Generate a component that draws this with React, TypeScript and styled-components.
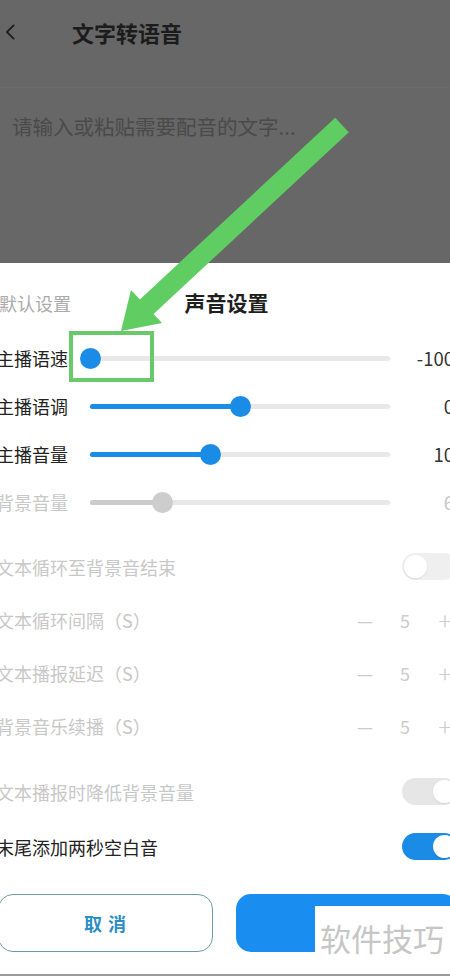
import React from 'react'
import styled, { createGlobalStyle } from 'styled-components'

const GlobalStyle = createGlobalStyle`
    html, body {
        margin: 0;
        padding: 0;
        width: 450px;
        height: 976px;
        overflow: hidden;
        background: #ffffff;
    }
    * {
        box-sizing: border-box;
    }
`

type SliderItem = { label: string; value: string; percent: number; disabled?: boolean }
type OptionItem =
    | { kind: 'toggle'; label: string; on: boolean; disabled?: boolean; space?: number }
    | { kind: 'stepper'; label: string; value: number; disabled?: boolean; space?: number }

const sliders: SliderItem[] = [
    { label: '主播语速', value: '-100', percent: 0 },
    { label: '主播语调', value: '0', percent: 50 },
    { label: '主播音量', value: '10', percent: 40 },
    { label: '背景音量', value: '6', percent: 24, disabled: true },
]

const options: OptionItem[] = [
    { kind: 'toggle', label: '文本循环至背景音结束', on: false, disabled: true },
    { kind: 'stepper', label: '文本循环间隔（S）', value: 5, disabled: true },
    { kind: 'stepper', label: '文本播报延迟（S）', value: 5, disabled: true },
    { kind: 'stepper', label: '背景音乐续播（S）', value: 5, disabled: true },
    { kind: 'toggle', label: '文本播报时降低背景音量', on: true, disabled: true, space: 13 },
    { kind: 'toggle', label: '末尾添加两秒空白音', on: true, space: 2 },
]

const App = () => {
    return (
        <Page>
            <GlobalStyle />

            <Backdrop>
                <Header>
                    <BackIcon viewBox="0 0 12 20">
                        <path d="M10 2 L2 10 L10 18" />
                    </BackIcon>
                    <Title>文字转语音</Title>
                </Header>
                <Editor>请输入或粘贴需要配音的文字...</Editor>
            </Backdrop>

            <Sheet>
                <SheetHead>
                    <Preset>默认设置</Preset>
                    <SheetTitle>声音设置</SheetTitle>
                    <span />
                </SheetHead>

                <SliderList>
                    {sliders.map((s) => (
                        <SliderRow key={s.label}>
                            <Label $disabled={s.disabled}>{s.label}</Label>
                            <Track>
                                <Fill $disabled={s.disabled} style={{ width: `${s.percent}%` }} />
                                <Thumb $disabled={s.disabled} style={{ left: `${s.percent}%` }} />
                            </Track>
                            <Value $disabled={s.disabled}>{s.value}</Value>
                        </SliderRow>
                    ))}
                </SliderList>

                <OptionList>
                    {options.map((o) => (
                        <OptionRow key={o.label} $space={o.space ?? 0}>
                            <Label $disabled={o.disabled}>{o.label}</Label>
                            {o.kind === 'toggle' ? (
                                <Switch $on={o.on} $disabled={o.disabled}>
                                    <Knob $on={o.on} />
                                </Switch>
                            ) : (
                                <Stepper>
                                    <StepCell>—</StepCell>
                                    <StepCell>{o.value}</StepCell>
                                    <StepCell $thin>+</StepCell>
                                </Stepper>
                            )}
                        </OptionRow>
                    ))}
                </OptionList>

                <Actions>
                    <CancelButton>取 消</CancelButton>
                    <ConfirmButton>确 定</ConfirmButton>
                </Actions>
            </Sheet>

            <Callout viewBox="0 0 450 976">
                <line x1="342" y1="125" x2="140" y2="313" stroke="#5fcd62" strokeWidth="20" />
                <polygon points="121,331 162,323 131,290" fill="#5fcd62" />
                <rect x="71" y="333" width="81" height="47" fill="none" stroke="#69c96b" strokeWidth="4" />
            </Callout>

            <Stamp>软件技巧</Stamp>
        </Page>
    )
}

export default App

const Page = styled.div`
    position: relative;
    width: 450px;
    height: 976px;
    display: flex;
    flex-direction: column;
    overflow: hidden;
    font-family: "Noto Sans CJK SC", "Noto Sans", sans-serif;
    border-bottom: 2px solid #9a9a9a;
`
const Backdrop = styled.div`
    height: 263px;
    background: #676767;
    display: flex;
    flex-direction: column;
`
const Header = styled.div`
    height: 88px;
    display: flex;
    align-items: flex-start;
    padding: 18px 0 0 5px;
    border-bottom: 1px solid #6c6c6c;
`
const BackIcon = styled.svg`
    width: 11px;
    height: 18px;
    margin-top: 5px;
    fill: none;
    stroke: #1e1e1e;
    stroke-width: 2;
`
const Title = styled.h1`
    margin: 0 0 0 56px;
    font-size: 22px;
    line-height: 28px;
    font-weight: bold;
    color: #1c1c1c;
`
const Editor = styled.p`
    margin: 0;
    padding: 24px 0 0 12px;
    font-size: 20.5px;
    line-height: 28px;
    color: #4a4a4a;
`
const Sheet = styled.div`
    flex: 1;
    background: #ffffff;
    margin: 0 -8px 0 -4px;
    display: flex;
    flex-direction: column;
`
const SheetHead = styled.div`
    display: grid;
    grid-template-columns: 1fr auto 1fr;
    align-items: center;
    padding-top: 24px;
    height: 52px;
    padding-left: 3px;
`
const Preset = styled.span`
    font-size: 18px;
    line-height: 28px;
    color: #ababab;
    margin-top: 2px;
`
const SheetTitle = styled.h2`
    margin: 0 4px 0 0;
    font-size: 21px;
    line-height: 28px;
    font-weight: bold;
    color: #1e1e1e;
`
const SliderList = styled.div`
    margin-top: 19px;
    display: flex;
    flex-direction: column;
`
const SliderRow = styled.div`
    display: grid;
    grid-template-columns: 94px 300px 1fr;
    align-items: center;
    height: 48px;
`
const Label = styled.span<{ $disabled?: boolean }>`
    font-size: 18px;
    line-height: 26px;
    white-space: nowrap;
    color: ${(p) => (p.$disabled ? '#c8c8c8' : '#222222')};
`
const Track = styled.div`
    position: relative;
    height: 5px;
    border-radius: 3px;
    background: #e8e8e8;
`
const Fill = styled.div<{ $disabled?: boolean }>`
    height: 100%;
    border-radius: 3px;
    background: ${(p) => (p.$disabled ? '#cccccc' : '#1a8ce6')};
`
const Thumb = styled.div<{ $disabled?: boolean }>`
    position: absolute;
    top: 50%;
    width: 21px;
    height: 21px;
    margin: -10.5px 0 0 -10.5px;
    border-radius: 50%;
    background: ${(p) => (p.$disabled ? '#cdcdcd' : '#1a8ce6')};
`
const Value = styled.span<{ $disabled?: boolean }>`
    text-align: right;
    padding-right: 4px;
    font-size: 18.5px;
    color: ${(p) => (p.$disabled ? '#c8c8c8' : '#333333')};
`
const OptionList = styled.div`
    margin-top: 14px;
    display: flex;
    flex-direction: column;
`
const OptionRow = styled.div<{ $space: number }>`
    display: flex;
    align-items: center;
    justify-content: space-between;
    height: 53px;
    margin-top: ${(p) => p.$space}px;
`
const Switch = styled.div<{ $on: boolean; $disabled?: boolean }>`
    position: relative;
    width: 56px;
    height: 27px;
    border-radius: 14px;
    background: ${(p) => (p.$disabled ? (p.$on ? '#e6e6e6' : '#efefef') : '#1a8ce6')};
`
const Knob = styled.div<{ $on: boolean }>`
    position: absolute;
    top: 2px;
    left: ${(p) => (p.$on ? '31px' : '2px')};
    width: 23px;
    height: 23px;
    border-radius: 50%;
    background: #ffffff;
    box-shadow: 0 1px 2px rgba(0, 0, 0, 0.08);
`
const Stepper = styled.div`
    display: flex;
    align-items: center;
    margin-right: -7px;
`
const StepCell = styled.span<{ $thin?: boolean }>`
    width: 40px;
    text-align: center;
    font-size: ${(p) => (p.$thin ? '24px' : '18px')};
    font-weight: ${(p) => (p.$thin ? 300 : 400)};
    color: #cccccc;
`
const Actions = styled.div`
    display: grid;
    grid-template-columns: 215px 1fr;
    gap: 23px;
    padding-left: 2px;
    margin-top: 21px;
`
const Button = styled.button`
    height: 58px;
    border-radius: 15px;
    font: inherit;
    font-size: 18px;
    font-weight: bold;
    letter-spacing: 1px;
`
const CancelButton = styled(Button)`
    background: #ffffff;
    border: 1.5px solid #6e9aa6;
    color: #2b8dc3;
`
const ConfirmButton = styled(Button)`
    background: #1a8ef0;
    border: none;
    color: #ffffff;
`
const Callout = styled.svg`
    position: absolute;
    top: 0;
    left: 0;
    width: 450px;
    height: 976px;
    pointer-events: none;
`
const Stamp = styled.div`
    position: absolute;
    right: 0;
    bottom: 0;
    width: 135px;
    height: 68px;
    background: #ffffff;
    padding: 12px 0 0 5px;
    font-size: 31px;
    line-height: 40px;
    color: #c6c6c6;
    white-space: nowrap;
`
